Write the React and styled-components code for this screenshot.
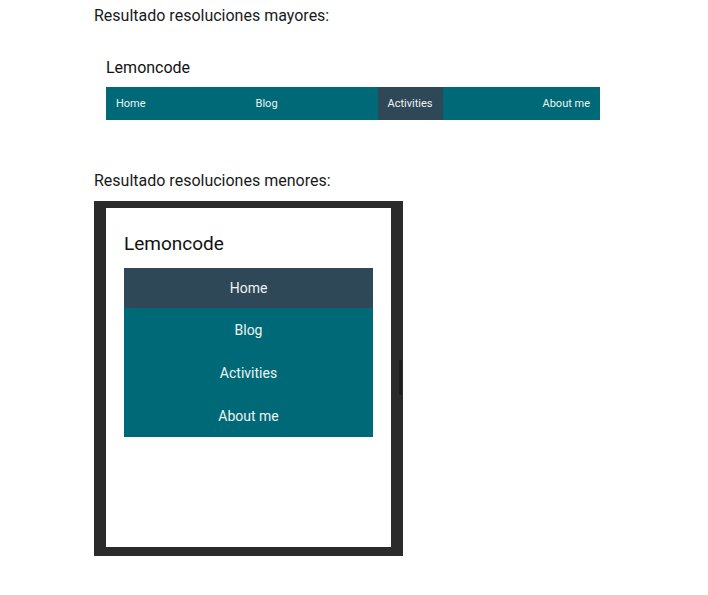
import React from "react";
import styled, { createGlobalStyle } from "styled-components";

const GlobalStyle = createGlobalStyle`
  body {
    margin: 0;
    background: #ffffff;
    font-family: Roboto, "Liberation Sans", sans-serif;
    color: #111;
  }
`;

const Page = styled.div`
  width: 708px;
  height: 595px;
  padding: 6px 0 0 94px;
  box-sizing: border-box;
`;

const Caption = styled.p`
  margin: 0;
  font-size: 16px;
  line-height: 20px;
  color: #1a1a1a;
`;

const DesktopShot = styled.div`
  width: 494px;
  margin: 32px 0 0 12px;
`;

const Brand = styled.h1`
  margin: 0;
  font-weight: 400;
  font-size: ${p => (p.$small ? "16px" : "19px")};
  line-height: ${p => (p.$small ? "20px" : "22px")};
  color: #111;
`;

const NavBar = styled.nav`
  display: flex;
  flex-direction: ${p => (p.$vertical ? "column" : "row")};
  justify-content: space-between;
  background: #006977;
  margin-top: ${p => (p.$vertical ? "13px" : "9px")};
`;

const NavItem = styled.a`
  display: flex;
  align-items: center;
  justify-content: center;
  padding: 0 10px;
  height: ${p => p.$h}px;
  font-size: ${p => p.$size}px;
  color: #eef3f4;
  background: ${p => (p.$active ? "#2f4858" : "transparent")};
  text-decoration: none;
`;

const MobileCaption = styled(Caption)`
  margin-top: 51px;
`;

const PhoneFrame = styled.div`
  position: relative;
  width: 309px;
  height: 355px;
  margin-top: 10px;
  padding: 7px 12px 9px 12px;
  box-sizing: border-box;
  background: #2b2b2b;
`;

const Screen = styled.div`
  height: 100%;
  background: #ffffff;
  padding: 25px 18px 0 18px;
  box-sizing: border-box;
`;

const ScrollThumb = styled.div`
  position: absolute;
  right: 1px;
  top: 159px;
  width: 3px;
  height: 35px;
  background: #1e1e1e;
`;

const links = ["Home", "Blog", "Activities", "About me"];

export default function App() {
  return (
    <Page>
      <GlobalStyle />
      <Caption>Resultado resoluciones mayores:</Caption>
      <DesktopShot>
        <Brand $small>Lemoncode</Brand>
        <NavBar>
          {links.map(l => (
            <NavItem key={l} $h={33} $size={11} $active={l === "Activities"}>
              {l}
            </NavItem>
          ))}
        </NavBar>
      </DesktopShot>
      <MobileCaption>Resultado resoluciones menores:</MobileCaption>
      <PhoneFrame>
        <Screen>
          <Brand>Lemoncode</Brand>
          <NavBar $vertical>
            {links.map(l => (
              <NavItem
                key={l}
                $h={l === "Home" ? 40 : 43}
                $size={14}
                $active={l === "Home"}
              >
                {l}
              </NavItem>
            ))}
          </NavBar>
        </Screen>
        <ScrollThumb />
      </PhoneFrame>
    </Page>
  );
}
